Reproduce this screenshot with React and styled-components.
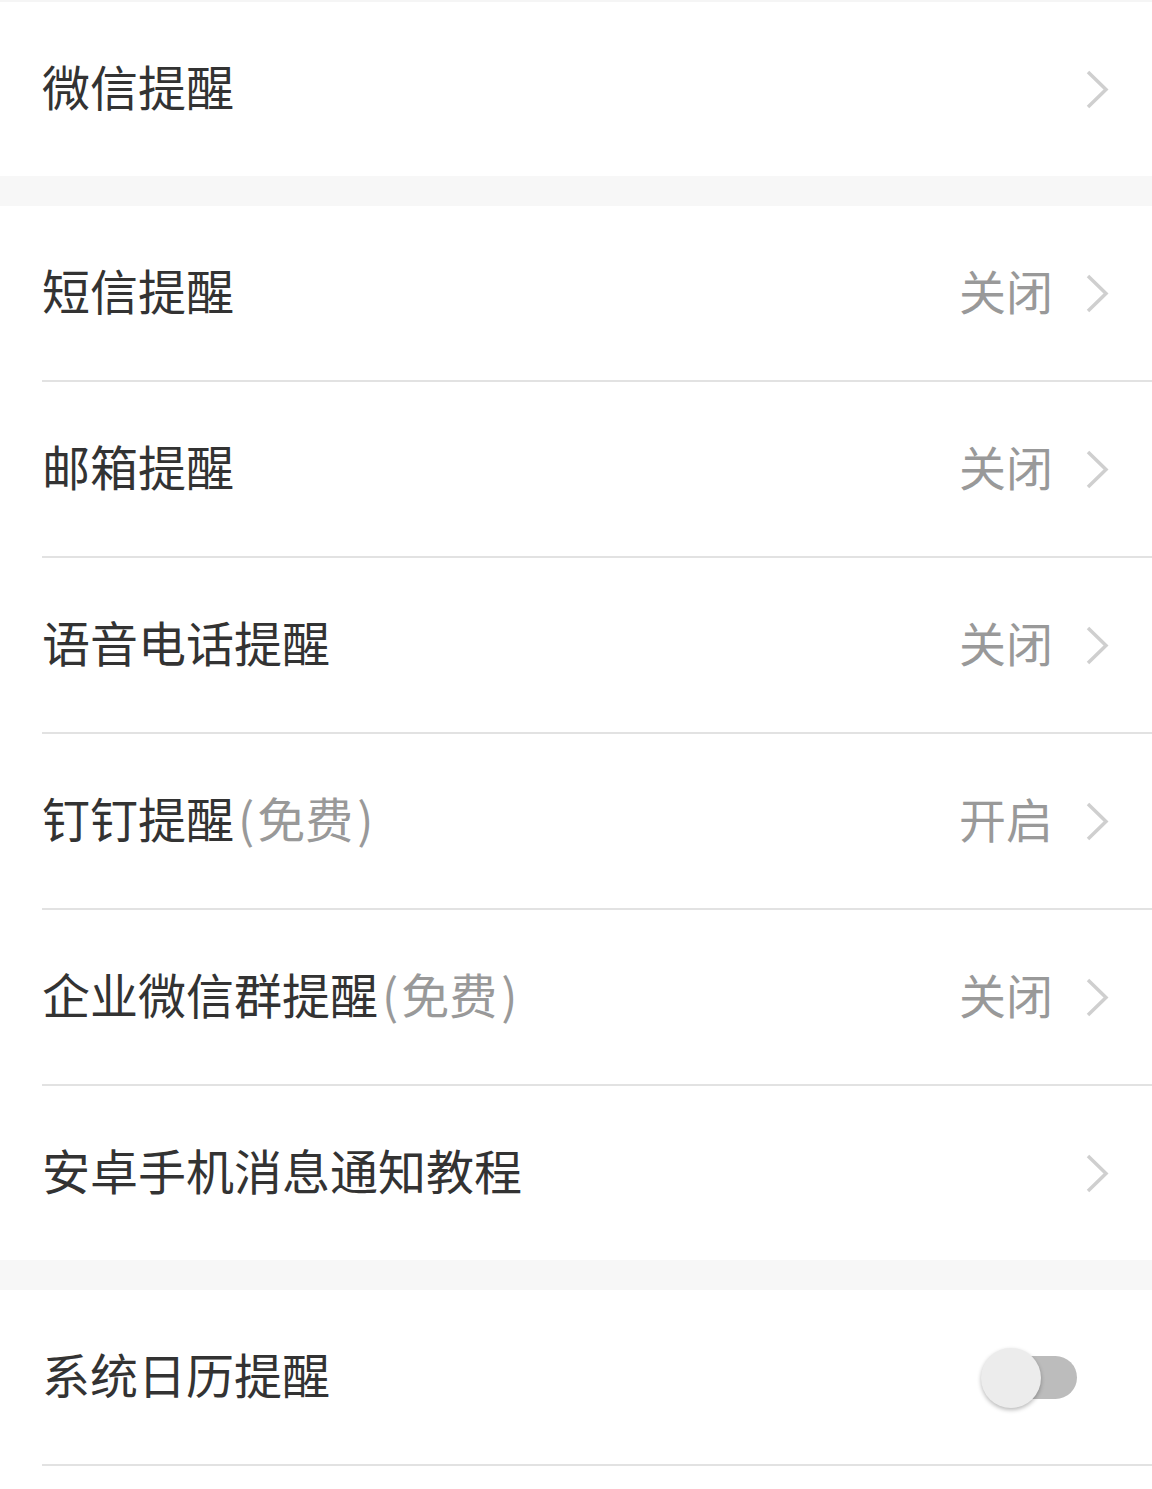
import { createGlobalStyle } from "styled-components";
import styled from "styled-components";

const GlobalStyle = createGlobalStyle`
  html, body {
    margin: 0;
    padding: 0;
    background: #fff;
  }
  body {
    font-family: "Noto Sans CJK SC", "Noto Sans", sans-serif;
  }
`;

const Page = styled.div`
  width: 1152px;
  min-height: 1489px;
  background: #fff;
  border-top: 2px solid #f5f5f5;
  box-sizing: border-box;
`;

const Group = styled.div`
  background: #fff;
`;

const Gap = styled.div`
  height: 30px;
  background: #f7f7f7;
`;

const Row = styled.div`
  box-sizing: border-box;
  margin-left: 42px;
  padding-right: 43px;
  padding-bottom: 8px;
  display: flex;
  align-items: center;
  justify-content: space-between;
  border-bottom: ${(p) => (p.$divider ? "2px solid #e2e2e2" : "none")};
  height: ${(p) => (p.$divider ? "176px" : "174px")};
`;

const Label = styled.span`
  font-size: 48px;
  color: #333;
`;

const Note = styled.span`
  color: #999;
`;

const Paren = styled.span`
  margin: 0 3px 0 4px;
`;

const Right = styled.div`
  display: flex;
  align-items: center;
  gap: 33px;
  margin-top: 8px;
`;

const Value = styled.span`
  font-size: 47px;
  color: #999;
  margin-bottom: 8px;
`;

const Switch = styled.div`
  position: relative;
  width: 86px;
  height: 43px;
  border-radius: 22px;
  background: #bcbcbc;
  margin-right: 32px;
  margin-top: 8px;
`;

const Knob = styled.div`
  position: absolute;
  left: -10px;
  top: -8px;
  width: 60px;
  height: 60px;
  border-radius: 50%;
  background: #ececec;
  box-shadow: 0 2px 4px rgba(0, 0, 0, 0.28);
`;

function Chevron() {
  return (
    <svg width="23" height="39" viewBox="0 0 23 39">
      <path d="M2 2 L20 19.5 L2 37" fill="none" stroke="#cfcfcf" strokeWidth="3.5" />
    </svg>
  );
}

function Item({ label, note, value, divider, toggle, arrow = true }) {
  return (
    <Row $divider={divider}>
      <Label>
        {label}
        {note && (
          <Note>
            <Paren>(</Paren>
            {note}
            <Paren>)</Paren>
          </Note>
        )}
      </Label>
      {toggle ? (
        <Switch>
          <Knob />
        </Switch>
      ) : (
        <Right>
          {value && <Value>{value}</Value>}
          {arrow && <Chevron />}
        </Right>
      )}
    </Row>
  );
}

export default function App() {
  return (
    <Page>
      <GlobalStyle />
      <Group>
        <Item label="微信提醒" />
      </Group>
      <Gap />
      <Group>
        <Item label="短信提醒" value="关闭" divider />
        <Item label="邮箱提醒" value="关闭" divider />
        <Item label="语音电话提醒" value="关闭" divider />
        <Item label="钉钉提醒" note="免费" value="开启" divider />
        <Item label="企业微信群提醒" note="免费" value="关闭" divider />
        <Item label="安卓手机消息通知教程" />
      </Group>
      <Gap />
      <Group>
        <Item label="系统日历提醒" toggle divider />
      </Group>
    </Page>
  );
}
